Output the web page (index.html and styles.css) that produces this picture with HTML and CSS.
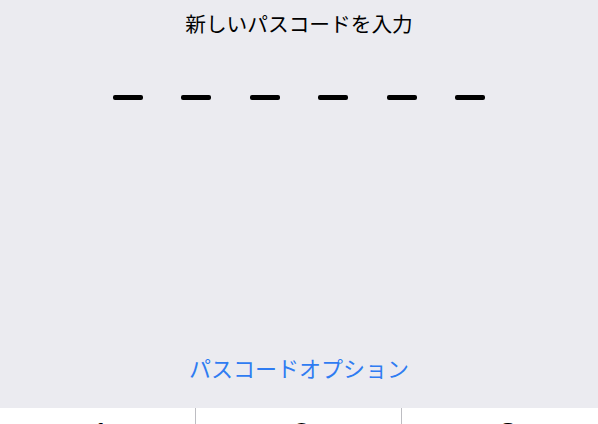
FILE: index.html
```html
<!DOCTYPE html>
<html lang="ja">
<head>
<meta charset="utf-8">
<link rel="stylesheet" href="styles.css">
</head>
<body>
<div class="screen">
  <div class="top">
    <div class="title">新しいパスコードを入力</div>
    <div class="dashes">
      <span class="dash"></span><span class="dash"></span><span class="dash"></span>
      <span class="dash"></span><span class="dash"></span><span class="dash"></span>
    </div>
  </div>
  <div class="options">パスコードオプション</div>
  <div class="keypad">
    <div class="key"><span class="digit">1</span></div>
    <div class="key"><span class="digit">2</span></div>
    <div class="key key-3"><span class="digit">3</span></div>
  </div>
</div>
</body>
</html>
```

FILE: styles.css
```css
html, body {
  margin: 0;
  padding: 0;
  height: 100%;
  overflow: hidden;
}
body {
  background: #ebebf0;
  font-family: "Noto Sans CJK JP", "Noto Sans", sans-serif;
}
.screen {
  display: flex;
  flex-direction: column;
  height: 424px;
}
.top {
  display: flex;
  flex-direction: column;
  align-items: center;
  flex: 1;
}
.title {
  margin-top: 8px;
  font-size: 20.7px;
  line-height: 30px;
  color: #000;
}
.dashes {
  display: flex;
  gap: 38.5px;
  margin-top: 57px;
}
.dash {
  display: block;
  width: 30px;
  height: 5px;
  border-radius: 2px;
  background: #000;
}
.options {
  text-align: center;
  font-size: 22px;
  line-height: 30px;
  color: #2f7cf2;
  margin-bottom: 26px;
}
.keypad {
  display: grid;
  grid-template-columns: 196px 206px 1fr;
  height: 16px;
  background: #fff;
}
.key {
  display: flex;
  justify-content: center;
  border-right: 1px solid #bdbdc2;
  overflow: hidden;
}
.key:last-child {
  border-right: none;
}
.key-3 {
  padding-left: 10px;
}
.digit {
  font-family: "Liberation Sans", sans-serif;
  font-size: 34px;
  line-height: 40px;
  margin-top: 6px;
  margin-left: 6px;
  color: #000;
}
```
